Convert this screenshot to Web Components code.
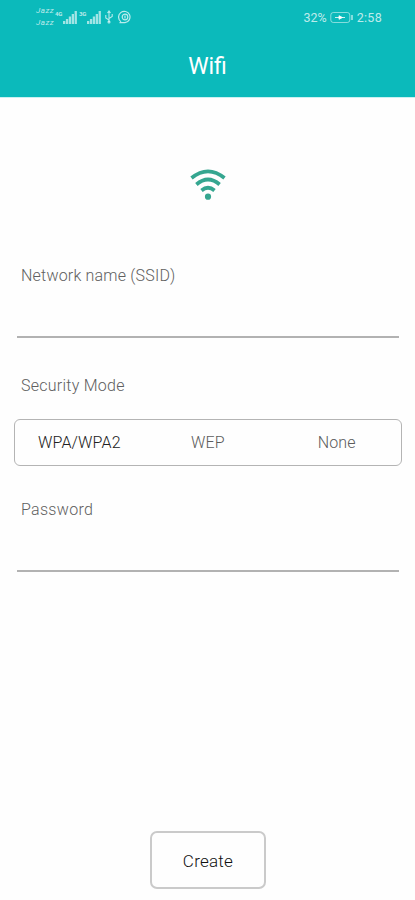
<!DOCTYPE html>
<html lang="en">
<head>
<meta charset="utf-8">
<title>Wifi</title>
<style>
html, body { margin: 0; height: 100%; background: #fefefe; }
body { font-family: Roboto, "Liberation Sans", sans-serif; overflow: hidden; }
</style>
</head>
<body>
<wifi-screen></wifi-screen>
<script>
function define(name, html) {
  const template = document.createElement('template');
  template.innerHTML = html;
  customElements.define(name, class extends HTMLElement {
    constructor() {
      super();
      this.attachShadow({ mode: 'open' }).append(template.content.cloneNode(true));
    }
  });
}

define('signal-bars', `
<style>:host { display: block; width: 14px; height: 13px; } svg { display: block; }</style>
<svg width="14" height="13" viewBox="0 0 14 13" fill="#fff">
  <path d="M0 10h2.300v3H0zM2.900 8h2.300v5H2.900zM5.800 5.500h2.300V13H5.800zM8.700 3H11v10H8.700zM11.600 0h2.300v13h-2.300z" fill-opacity=".62"/>
</svg>`);

define('status-bar', `
<style>
:host { display: flex; height: 34px; box-sizing: border-box; padding: 0 33px 0 36px; align-items: center; color: rgba(255,255,255,.72); }
.carrier { width: 19px; font: italic 400 8px/12px Roboto, sans-serif; letter-spacing: .5px; }
.carrier span { display: block; }
.gen { font: 700 6px/6px Roboto, sans-serif; width: 8px; align-self: flex-start; margin-top: 11px; letter-spacing: -.2px; }
.second { margin-left: 2px; }
.usb { margin-left: 3px; }
.ring { margin-left: 4px; }
.right { margin-left: auto; display: flex; align-items: center; font-size: 12.500px; font-weight: 400; color: rgba(255,255,255,.74); gap: 3px; }
.time { letter-spacing: .3px; }
svg { display: block; }
</style>
<div class="carrier"><span>Jazz</span><span>Jazz</span></div>
<div class="gen">4G</div><signal-bars></signal-bars>
<div class="gen second">3G</div><signal-bars></signal-bars>
<svg class="usb" width="10" height="14" viewBox="0 0 10 14" fill="none" stroke="#fff" stroke-opacity=".7" stroke-width="1.100">
  <path d="M5 1.500V12M5 10L1.800 8V5M5 8.500L8.200 6.500V4M3.500 3L5 1l1.500 2"/><circle cx="5" cy="12" r="1"/>
</svg>
<svg class="ring" width="14" height="14" viewBox="0 0 14 14" fill="none" stroke="#fff" stroke-opacity=".72" stroke-width="1.200">
  <path d="M3 11.700A5.700 5.700 0 1 1 7 12.700H1.500"/><circle cx="7" cy="7" r="2.800"/><path d="M7 5.500v3"/>
</svg>
<div class="right"><span>32%</span>
<svg width="24" height="13" viewBox="0 0 24 13" fill="none" stroke="#fff" stroke-opacity=".5">
  <rect x=".8" y="1.500" width="19" height="10" rx="2.500"/><path d="M22 4v5" stroke-width="2"/>
  <path d="M5 6.500h10M9 4.700v3.600l3.500-1.800z" stroke-opacity=".8" fill="#fff"/>
</svg><span class="time">2:58</span></div>`);

define('app-header', `
<style>
:host { display: block; height: 97px; background: #0bbabb; color: #fff; box-shadow: 0 1px 0 #c9f1f1; }
h1 { margin: 0; height: 63px; line-height: 66px; text-align: center; font-size: 23px; font-weight: 400; }
</style>
<status-bar></status-bar><h1><slot></slot></h1>`);

define('wifi-icon', `
<style>:host { display: block; width: 36px; height: 34px; } svg { display: block; }</style>
<svg width="36" height="34" viewBox="0 0 36 34" fill="none" stroke="#35a690" stroke-width="3.700">
  <path d="M1.500 10Q18-3.400 34.500 10M6.400 16.500Q18 6.500 29.600 16.500M11.500 22.500Q18 17 24.500 22.500"/>
  <circle cx="18" cy="28.700" r="3.100" fill="#35a690" stroke="none"/>
</svg>`);

define('field-label', `
<style>:host { display: block; height: 20px; margin-left: 21px; font-size: 16px; line-height: 20px; font-weight: 300; letter-spacing: var(--track, .2px); color: #606060; }</style>
<slot></slot>`);

define('text-field', `
<style>:host { display: block; height: 73px; } .line { box-sizing: border-box; height: 52px; margin: 0 16px 0 17px; border-bottom: 2px solid #b2b2b2; }</style>
<field-label><slot></slot></field-label><div class="line"></div>`);

define('mode-option', `
<style>:host { display: block; text-align: center; font-size: 16px; line-height: 46px; font-weight: 300; letter-spacing: .15px; color: #5c5c5c; } :host([selected]) { color: #202020; }</style>
<slot></slot>`);

define('mode-picker', `
<style>:host { display: grid; grid-template-columns: repeat(3, 1fr); box-sizing: border-box; height: 47px; margin: 0 13px 0 14px; border: 1.500px solid #b4b4b4; border-radius: 6px; }</style>
<slot></slot>`);

define('create-button', `
<style>
:host { display: block; width: 116px; height: 58px; }
button { box-sizing: border-box; width: 100%; height: 100%; padding: 1px 0 0; border: 2px solid #cacaca; border-radius: 7px; background: #fefefe; font: 300 17px/20px Roboto, sans-serif; letter-spacing: .25px; color: #101010; }
</style>
<button><slot></slot></button>`);

define('wifi-screen', `
<style>
:host { display: flex; flex-direction: column; height: 900px; }
wifi-icon { margin: 71px auto 0 190px; }
.ssid { margin-top: 64px; }
.security { margin-top: 37px; --track: .25px; }
mode-picker { margin-top: 23px; }
.password { margin-top: 34px; --track: .3px; }
create-button { margin: auto 0 11px 150px; }
</style>
<app-header>Wifi</app-header>
<wifi-icon></wifi-icon>
<text-field class="ssid">Network name (SSID)</text-field>
<field-label class="security">Security Mode</field-label>
<mode-picker>
  <mode-option selected>WPA/WPA2</mode-option>
  <mode-option>WEP</mode-option>
  <mode-option>None</mode-option>
</mode-picker>
<text-field class="password">Password</text-field>
<create-button>Create</create-button>`);
</script>
</body>
</html>
